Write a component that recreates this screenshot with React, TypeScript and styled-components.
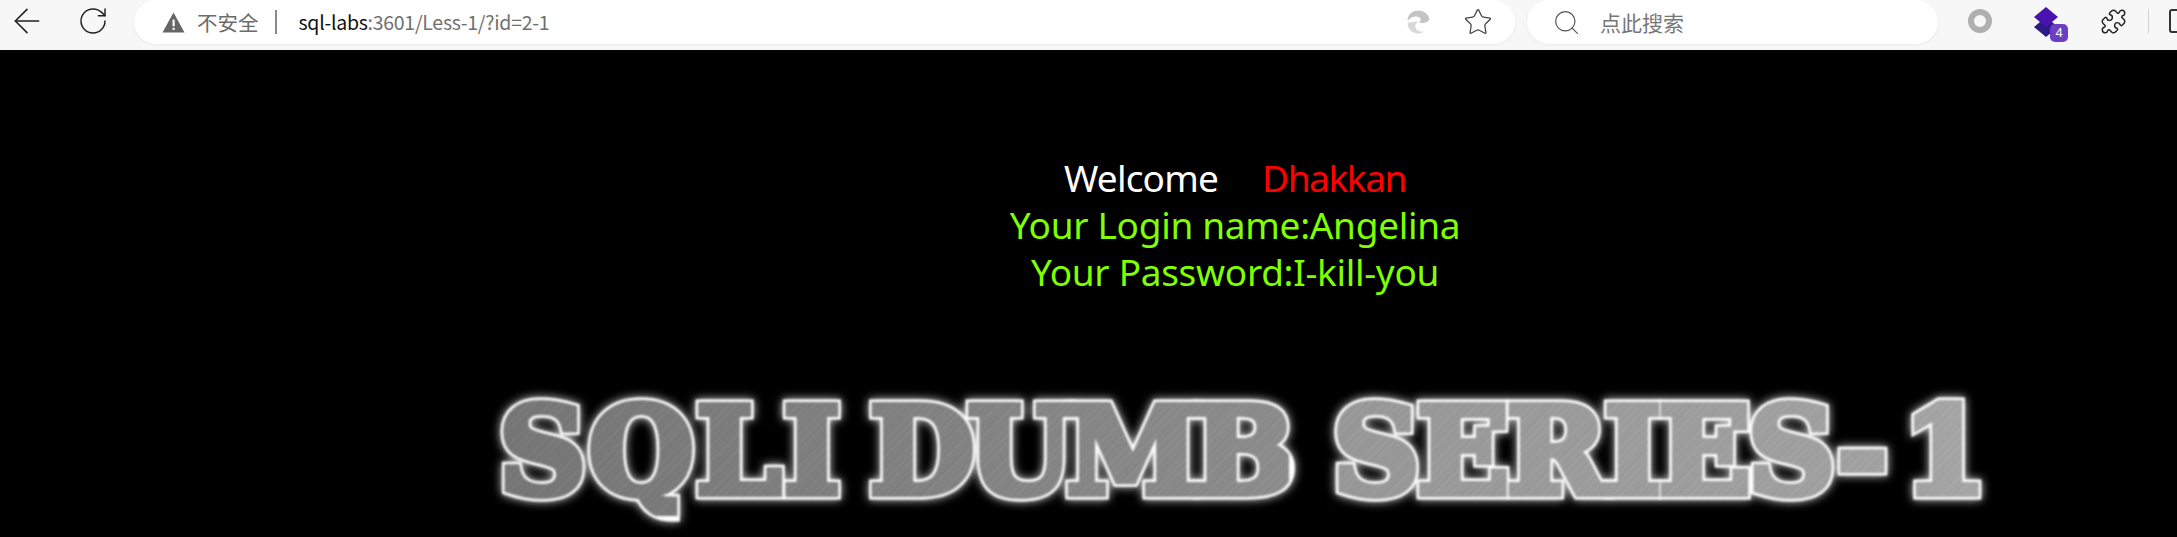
import styled, { createGlobalStyle } from "styled-components";
import { ArrowLeft, RotateCw, Search, Star, Puzzle } from "lucide-react";

const GlobalStyle = createGlobalStyle`
  html, body {
    margin: 0;
    height: 100%;
    background: #000;
    overflow: hidden;
  }
`;

const bannerWords = [
  { text: "SQLI", spacing: 3, gap: 0, from: "#777", to: "#828282" },
  { text: "DUMB", spacing: -6, gap: 27, from: "#828282", to: "#8e8e8e" },
  { text: "SERIES-", spacing: -2, gap: 44, from: "#9a9a9a", to: "#a4a4a4" },
  { text: "1", spacing: 0, gap: 18, from: "#a4a4a4", to: "#aaa" },
];

const App = () => {
  return (
    <>
      <GlobalStyle />
      <Toolbar>
        <NavButton $width={54}>
          <ArrowLeft size={40} strokeWidth={0.95} />
        </NavButton>
        <NavButton $width={78}>
          <RotateCw size={32} strokeWidth={1.1} />
        </NavButton>
        <AddressBar>
          <WarnIcon viewBox="0 0 24 24">
            <path d="M12 1.5 23.5 22.5H.5Z" fill="#666" />
            <rect x="11" y="9" width="2.2" height="7" fill="#fff" />
            <rect x="11" y="17.6" width="2.2" height="2.2" fill="#fff" />
          </WarnIcon>
          <Insecure>不安全</Insecure>
          <Divider />
          <Url>
            <b>sql-labs</b>:3601/Less-1/?id=2-1
          </Url>
          <EdgeIcon viewBox="0 0 24 24">
            <path
              d="M12 1C5.500 1 1.500 5.500 1.500 11c3-4 8-5 11-3.500 2.500 1.300 2 4-.5 4.500 4 2 9 .5 10.500-2.500C22 5 17.500 1 12 1Z"
              fill="#c4c4c4"
            />
            <path
              d="M1.500 13c0 5.500 4.500 10 10 10 2.500 0 4.500-.8 6-2-4 1-8-1-8.500-4.500-.3-2 1-4 3-4.500-4.500-1-9 .5-10.500 1Z"
              fill="#d8d8d8"
            />
          </EdgeIcon>
          <StarIcon>
            <Star size={30} strokeWidth={1} />
          </StarIcon>
        </AddressBar>
        <SearchBar>
          <Search size={29} strokeWidth={1} color="#555" />
          <SearchText>点此搜索</SearchText>
        </SearchBar>
        <ExtensionTray>
          <RingIcon />
          <StackIcon>
            <svg viewBox="0 0 26 30" width="26" height="30">
              <path d="M13 10 25 20 13 30 1 20Z" fill="#2d1a86" />
              <path d="M13 0 25 10 13 20 1 10Z" fill="#4a12b0" />
            </svg>
            <Badge>4</Badge>
          </StackIcon>
          <Puzzle size={27} strokeWidth={1.3} />
          <TrayDivider />
          <CutIcon />
        </ExtensionTray>
      </Toolbar>
      <Main>
        <Greeting>
          <White>Welcome</White>
          <Red>Dhakkan</Red>
        </Greeting>
        <Line>Your Login name:Angelina</Line>
        <Line>Your Password:I-kill-you</Line>
        <Banner>
          {bannerWords.map((word) => (
            <BannerWord
              key={word.text}
              data-text={word.text}
              $spacing={word.spacing}
              $gap={word.gap}
              $from={word.from}
              $to={word.to}
            >
              {word.text}
            </BannerWord>
          ))}
        </Banner>
      </Main>
    </>
  );
};

const Toolbar = styled.header`
  display: flex;
  align-items: flex-start;
  height: 50px;
  background: #f7f7f7;
  color: #222;
  overflow: hidden;
`;

const NavButton = styled.div<{ $width: number }>`
  display: flex;
  align-items: center;
  justify-content: center;
  flex: none;
  width: ${(p) => p.$width}px;
  height: 42px;
`;

const AddressBar = styled.div`
  display: flex;
  align-items: center;
  flex: none;
  box-sizing: border-box;
  width: 1381px;
  height: 44px;
  margin-left: 2px;
  padding: 0 0 0 27px;
  background: #fff;
  border-radius: 22px;
  box-shadow: 0 1px 3px rgba(0, 0, 0, 0.06);
`;

const WarnIcon = styled.svg`
  flex: none;
  width: 25px;
  height: 23px;
`;

const Insecure = styled.span`
  margin-left: 11px;
  font: 20.5px/1 "Noto Sans CJK SC", sans-serif;
  color: #6b6b6b;
`;

const Divider = styled.span`
  width: 2px;
  height: 24px;
  margin: 0 22px 0 16px;
  background: #8a8a8a;
`;

const Url = styled.span`
  flex: 1;
  margin-top: -2px;
  font: 19.5px "Noto Sans CJK SC", sans-serif;
  color: #707070;
  white-space: nowrap;
  letter-spacing: -0.27px;

  b {
    font-weight: 400;
    color: #111;
  }
`;

const EdgeIcon = styled.svg`
  flex: none;
  width: 25px;
  height: 26px;
  margin-right: 32px;
`;

const StarIcon = styled.span`
  display: flex;
  flex: none;
  margin-right: 22px;
  color: #444;
`;

const SearchBar = styled.div`
  display: flex;
  align-items: center;
  flex: none;
  box-sizing: border-box;
  width: 411px;
  height: 44px;
  margin-left: 12px;
  padding-left: 25px;
  background: #fff;
  border-radius: 22px;
  box-shadow: 0 1px 3px rgba(0, 0, 0, 0.06);
`;

const SearchText = styled.span`
  margin-left: 19px;
  font: 21px/1 "Noto Sans CJK SC", sans-serif;
  color: #777;
`;

const ExtensionTray = styled.div`
  display: flex;
  align-items: center;
  height: 42px;
  margin-left: 30px;
`;

const RingIcon = styled.span`
  flex: none;
  box-sizing: border-box;
  width: 24px;
  height: 24px;
  border: 6px solid #b0b0b0;
  border-radius: 50%;
`;

const StackIcon = styled.span`
  position: relative;
  display: flex;
  flex: none;
  margin: 2px 41px 0 41px;
`;

const Badge = styled.span`
  position: absolute;
  right: -9px;
  bottom: -5px;
  width: 18px;
  height: 18px;
  border-radius: 5px;
  background: #6a3fc4;
  color: #fff;
  font: 13px/18px "Liberation Sans", sans-serif;
  text-align: center;
`;

const TrayDivider = styled.span`
  flex: none;
  width: 1px;
  height: 24px;
  margin-left: 21px;
  background: #d0d0d0;
`;

const CutIcon = styled.span`
  flex: none;
  width: 12px;
  height: 20px;
  margin-left: 20px;
  border: 2px solid #333;
  border-radius: 3px;
`;

const Main = styled.main`
  display: flex;
  flex-direction: column;
  align-items: center;
  padding: 104px 0 0 293px;
  font: 37px/47px "Noto Sans", sans-serif;
  letter-spacing: -0.3px;
  color: #7fff00;
`;

const Greeting = styled.div`
  display: flex;
  gap: 44px;
`;

const White = styled.span`
  letter-spacing: -0.8px;
  color: #fff;
`;

const Red = styled.span`
  letter-spacing: -1.4px;
  color: #f00;
`;

const Line = styled.div`
  white-space: nowrap;
`;

const Banner = styled.h1`
  display: flex;
  margin: 91px 0 0 16px;
  font: 700 120px/130px "DejaVu Serif", serif;
  white-space: pre;
  filter: blur(0.9px) drop-shadow(0 0 5px rgba(255, 255, 255, 0.85));
`;

const BannerWord = styled.span<{
  $spacing: number;
  $gap: number;
  $from: string;
  $to: string;
}>`
  position: relative;
  margin-left: ${(p) => p.$gap}px;
  letter-spacing: ${(p) => p.$spacing}px;
  color: transparent;
  -webkit-text-stroke: 13px #fff;

  &::after {
    content: attr(data-text);
    position: absolute;
    inset: 0;
    -webkit-text-stroke: 8px transparent;
    color: transparent;
    background:
      repeating-linear-gradient(
        135deg,
        rgba(255, 255, 255, 0.07) 0 1px,
        rgba(0, 0, 0, 0.04) 1px 4px,
        rgba(255, 255, 255, 0.04) 4px 6px,
        rgba(0, 0, 0, 0.02) 6px 11px
      ),
      linear-gradient(90deg, ${(p) => p.$from}, ${(p) => p.$to});
    -webkit-background-clip: text;
    background-clip: text;
  }
`;

export default App;
